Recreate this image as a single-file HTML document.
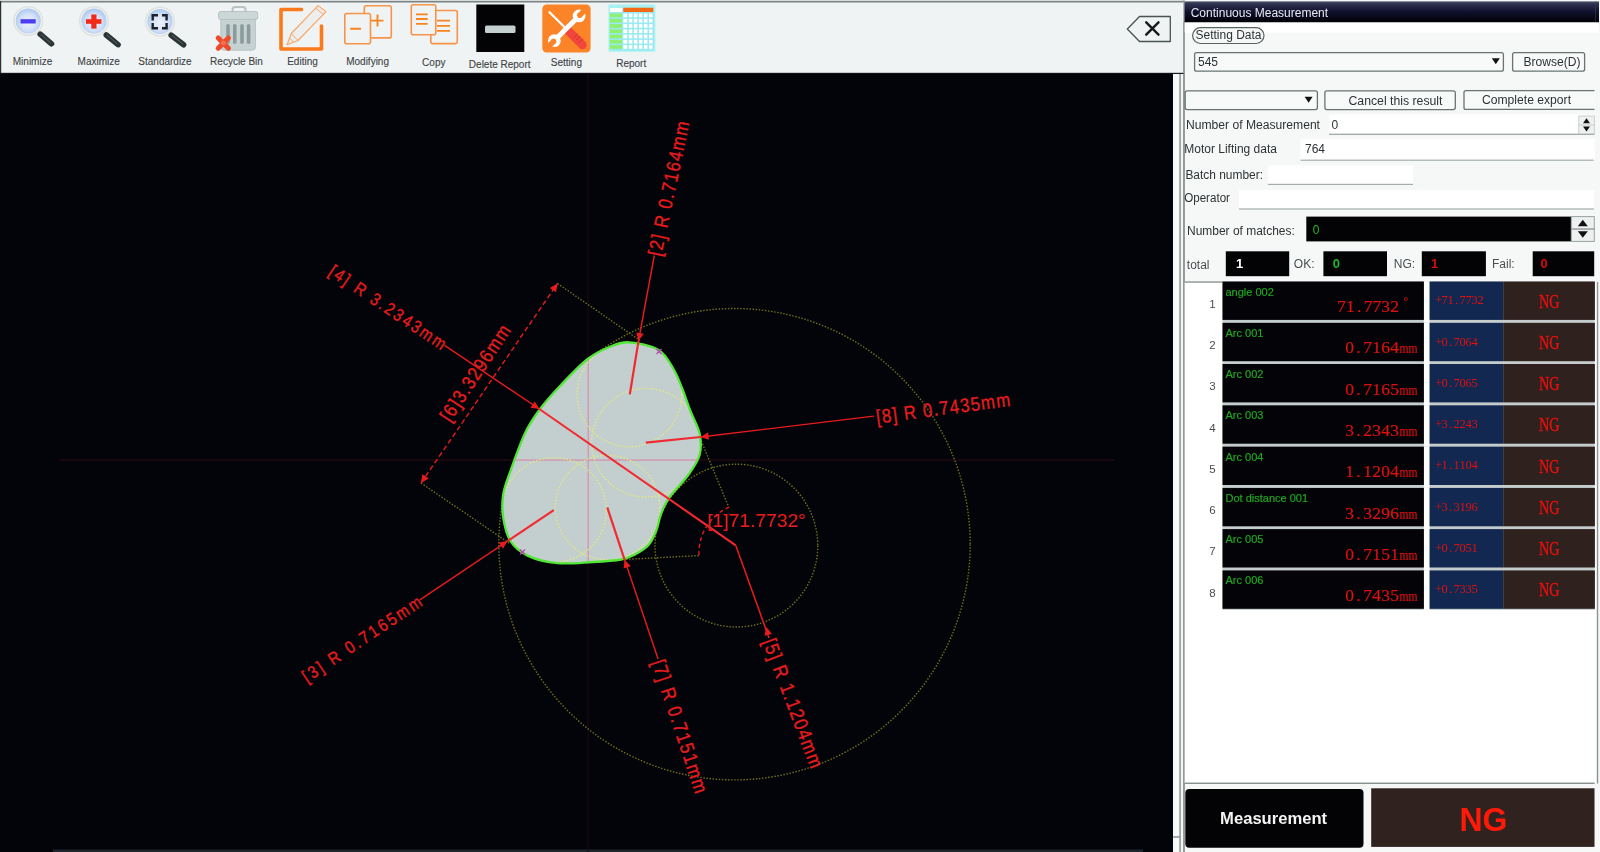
<!DOCTYPE html>
<html><head><meta charset="utf-8"><style>
html,body{margin:0;padding:0;background:#03030a;overflow:hidden;width:1600px;height:852px}
svg{display:block;filter:blur(0.45px)}
</style></head><body>
<svg width="1600" height="852" viewBox="0 0 1600 852">
<rect x="0" y="0" width="1184" height="73.5" fill="#eff3f3"/>
<rect x="0" y="0" width="1600" height="1" fill="#d8dcdc"/>
<rect x="0" y="1" width="1184" height="1.5" fill="#7a8282"/>
<rect x="0" y="1" width="1.2" height="72" fill="#2a3033"/>
<rect x="0" y="72.8" width="1184" height="1.2" fill="#1a1d22"/>
<defs>
<radialGradient id="lens" cx="0.5" cy="0.55" r="0.55">
<stop offset="0" stop-color="#eef2fb"/><stop offset="0.6" stop-color="#d2e0f6"/><stop offset="1" stop-color="#a8c6ef"/>
</radialGradient>
<linearGradient id="tbar" x1="0" y1="0" x2="0" y2="1">
<stop offset="0" stop-color="#4a5266"/><stop offset="0.12" stop-color="#2e3250"/><stop offset="0.5" stop-color="#10102e"/><stop offset="1" stop-color="#000004"/>
</linearGradient>
</defs>
<circle cx="28.2" cy="21" r="14.3" fill="#f4f6f4" stroke="#dfe3df" stroke-width="1.6"/>
<circle cx="28.2" cy="21" r="12.6" fill="url(#lens)"/>
<line x1="40.2" y1="34.2" x2="51.5" y2="43.8" stroke="#2c3535" stroke-width="5.6" stroke-linecap="round"/>
<line x1="41.2" y1="34.400000000000006" x2="50.5" y2="42.8" stroke="#7d8888" stroke-width="0.8" stroke-linecap="round" opacity="0.7"/>
<rect x="20.5" y="19.2" width="15.2" height="4.3" fill="#4a3ef2"/>
<circle cx="94" cy="21.2" r="14.3" fill="#f4f6f4" stroke="#dfe3df" stroke-width="1.6"/>
<circle cx="94" cy="21.2" r="12.6" fill="url(#lens)"/>
<line x1="106.3" y1="35" x2="118" y2="44.6" stroke="#2c3535" stroke-width="5.6" stroke-linecap="round"/>
<line x1="107.3" y1="35.2" x2="117" y2="43.6" stroke="#7d8888" stroke-width="0.8" stroke-linecap="round" opacity="0.7"/>
<rect x="91.3" y="14.5" width="5.2" height="14.1" fill="#f22a1a"/><rect x="86" y="19.2" width="15.4" height="4.6" fill="#f22a1a"/>
<circle cx="160" cy="21.5" r="14.3" fill="#f4f6f4" stroke="#dfe3df" stroke-width="1.6"/>
<circle cx="160" cy="21.5" r="12.6" fill="url(#lens)"/>
<line x1="171.2" y1="35.2" x2="183.6" y2="44.8" stroke="#2c3535" stroke-width="5.6" stroke-linecap="round"/>
<line x1="172.2" y1="35.400000000000006" x2="182.6" y2="43.8" stroke="#7d8888" stroke-width="0.8" stroke-linecap="round" opacity="0.7"/>
<path d="M152.7 20.5V15.3H158 M162 15.3H166.6V20.5 M166.6 23V28.3H162 M158 28.3H152.7V23" fill="none" stroke="#1e2228" stroke-width="2.4"/>
<path d="M232.5 12V9.5Q232.5 7 235 7H243Q245.5 7 245.5 9.5V12" fill="none" stroke="#b8c4c4" stroke-width="2"/>
<rect x="218.5" y="11.5" width="39.2" height="8" rx="2" fill="#cbd6d6" stroke="#b0bcbc" stroke-width="0.8"/>
<path d="M220.8 19.4H255.5V47Q255.5 50.3 252 50.3H224Q220.8 50.3 220.8 47Z" fill="#c6d2d2" stroke="#b3bfbf" stroke-width="0.8"/>
<rect x="226.2" y="24" width="3.6" height="20" rx="1.8" fill="#8c9c9c"/>
<rect x="233.0" y="24" width="3.6" height="20" rx="1.8" fill="#8c9c9c"/>
<rect x="240.2" y="24" width="3.6" height="20" rx="1.8" fill="#8c9c9c"/>
<rect x="246.79999999999998" y="24" width="3.6" height="20" rx="1.8" fill="#8c9c9c"/>
<path d="M218.2 38L228.4 48.2 M228.4 38L218.2 48.2" stroke="#f04828" stroke-width="5" stroke-linecap="round"/>
<circle cx="223.3" cy="43.1" r="2.5" fill="#f47050"/>
<path d="M301.5 9.5H281V49H321.5V26" fill="none" stroke="#fb7a1c" stroke-width="3.6" stroke-linecap="round" stroke-linejoin="round"/>
<path d="M287.1 44.8L291.3 33.5L318 5.6L326 11.6L298 40.5Z" fill="#ecefed" stroke="#f9a464" stroke-width="1.1" stroke-linejoin="round"/>
<path d="M291.3 33.5L298 40.5 M315.5 8.2L323.5 14.3 M289.5 38L293.5 42" stroke="#f9a464" stroke-width="1"/>
<rect x="364.3" y="5.7" width="27" height="32.2" rx="2" fill="#eff3f3" stroke="#f8934a" stroke-width="1.6"/>
<rect x="344.8" y="13.5" width="25.7" height="30.2" rx="2" fill="#eff3f3" stroke="#f8934a" stroke-width="1.6"/>
<path d="M350.2 28.7H361 M371 20.6H383.5 M377.5 14.5V26.5" stroke="#f8841f" stroke-width="1.9"/>
<rect x="430.8" y="10.5" width="26.5" height="33.1" rx="2" fill="#eff3f3" stroke="#f8934a" stroke-width="1.6"/>
<rect x="411.3" y="4.8" width="24.5" height="30" rx="2" fill="#eff3f3" stroke="#f8934a" stroke-width="1.6"/>
<path d="M416 14.3H427.7 M416 19H427.7 M416 23.8H427.7 M437 20.6H450 M437 25.8H450 M437 30.9H450" stroke="#f8841f" stroke-width="1.8"/>
<rect x="476.3" y="4.5" width="48" height="47.5" fill="#030305"/>
<rect x="485" y="25.5" width="30.5" height="7.5" rx="1.5" fill="#c4d0d0"/>
<rect x="542.3" y="4.5" width="48.3" height="48.1" rx="4.5" fill="#fb8428"/>
<line x1="549.5" y1="12.2" x2="568" y2="30.5" stroke="#fff" stroke-width="2.2" stroke-linecap="round"/>
<line x1="568.5" y1="31" x2="582.5" y2="45" stroke="#f0463c" stroke-width="8.5" stroke-linecap="round"/>
<path d="M574 37.5L578 33.5 M576.5 40L580.5 36 M579 42.5L583 38.5" stroke="#d02a20" stroke-width="0.9"/>
<g transform="translate(566.7 28.3) rotate(-45)"><rect x="-17" y="-2.5" width="34" height="5" fill="#fff"/><circle cx="-17.5" cy="0" r="6.4" fill="#fff"/><circle cx="17.5" cy="0" r="6.4" fill="#fff"/><rect x="18" y="-2.7" width="8" height="5.4" fill="#fb8428"/><circle cx="18.5" cy="0" r="2.7" fill="#fb8428"/><rect x="-26" y="-2.7" width="8" height="5.4" fill="#fb8428"/><circle cx="-18.5" cy="0" r="2.7" fill="#fb8428"/></g>
<rect x="608.5" y="4.5" width="46.8" height="47.2" fill="#a6f2f2"/>
<rect x="610" y="8" width="12.5" height="4.7" fill="#ffffff"/>
<rect x="623" y="7.7" width="30.3" height="5" fill="#f46a14"/>
<rect x="609.7" y="12.8" width="12.6" height="36.8" fill="#8ef070"/>
<rect x="623" y="12.8" width="30.3" height="36.8" fill="#ffffff"/>
<rect x="627.25" y="12.8" width="1.6" height="36.8" fill="#9aeaf0"/>
<rect x="632.3000000000001" y="12.8" width="1.6" height="36.8" fill="#9aeaf0"/>
<rect x="637.35" y="12.8" width="1.6" height="36.8" fill="#9aeaf0"/>
<rect x="642.4000000000001" y="12.8" width="1.6" height="36.8" fill="#9aeaf0"/>
<rect x="647.45" y="12.8" width="1.6" height="36.8" fill="#9aeaf0"/>
<rect x="652.5" y="12.8" width="1.6" height="36.8" fill="#9aeaf0"/>
<rect x="609.7" y="12.0" width="43.6" height="1.6" fill="#9aeaf0"/>
<rect x="609.7" y="17.26" width="43.6" height="1.6" fill="#9aeaf0"/>
<rect x="609.7" y="22.52" width="43.6" height="1.6" fill="#9aeaf0"/>
<rect x="609.7" y="27.779999999999998" width="43.6" height="1.6" fill="#9aeaf0"/>
<rect x="609.7" y="33.040000000000006" width="43.6" height="1.6" fill="#9aeaf0"/>
<rect x="609.7" y="38.3" width="43.6" height="1.6" fill="#9aeaf0"/>
<rect x="609.7" y="43.56" width="43.6" height="1.6" fill="#9aeaf0"/>
<rect x="609.7" y="48.82000000000001" width="43.6" height="1.6" fill="#9aeaf0"/>
<rect x="622.4" y="7.7" width="0.9" height="42" fill="#9aeaf0"/>
<path d="M1139.5 16.5H1170.3V41.5H1139.5L1127.3 29Z" fill="none" stroke="#4a5252" stroke-width="1.3" stroke-linejoin="round"/>
<path d="M1146.2 22.3L1158.5 34.7 M1158.5 22.3L1146.2 34.7" stroke="#161a1a" stroke-width="2.4" stroke-linecap="round"/>
<text x="32.5" y="65" font-family="Liberation Sans" font-size="10" fill="#3c4144" text-anchor="middle" font-weight="normal" stroke="#3c4144" stroke-width="0.1">Minimize</text>
<text x="98.7" y="65" font-family="Liberation Sans" font-size="10" fill="#3c4144" text-anchor="middle" font-weight="normal" stroke="#3c4144" stroke-width="0.1">Maximize</text>
<text x="165" y="65" font-family="Liberation Sans" font-size="10" fill="#3c4144" text-anchor="middle" font-weight="normal" stroke="#3c4144" stroke-width="0.1">Standardize</text>
<text x="236.5" y="65" font-family="Liberation Sans" font-size="10" fill="#3c4144" text-anchor="middle" font-weight="normal" stroke="#3c4144" stroke-width="0.1">Recycle Bin</text>
<text x="302.5" y="65" font-family="Liberation Sans" font-size="10" fill="#3c4144" text-anchor="middle" font-weight="normal" stroke="#3c4144" stroke-width="0.1">Editing</text>
<text x="367.6" y="65" font-family="Liberation Sans" font-size="10" fill="#3c4144" text-anchor="middle" font-weight="normal" stroke="#3c4144" stroke-width="0.1">Modifying</text>
<text x="433.8" y="65.5" font-family="Liberation Sans" font-size="10" fill="#3c4144" text-anchor="middle" font-weight="normal" stroke="#3c4144" stroke-width="0.1">Copy</text>
<text x="499.7" y="67.5" font-family="Liberation Sans" font-size="10" fill="#3c4144" text-anchor="middle" font-weight="normal" stroke="#3c4144" stroke-width="0.1">Delete Report</text>
<text x="566.4" y="66.3" font-family="Liberation Sans" font-size="10" fill="#3c4144" text-anchor="middle" font-weight="normal" stroke="#3c4144" stroke-width="0.1">Setting</text>
<text x="631.2" y="66.5" font-family="Liberation Sans" font-size="10" fill="#3c4144" text-anchor="middle" font-weight="normal" stroke="#3c4144" stroke-width="0.1">Report</text>
<rect x="0" y="73.6" width="1173" height="779" fill="#03030a"/>
<rect x="53" y="849.5" width="1090" height="2.5" fill="#1c262c"/>
<defs><clipPath id="blobclip"><path d="M629.0 342.3 C637.2 342.8 651.2 345.4 658.6 349.9 C666.0 354.3 669.6 362.6 673.5 369.0 C677.4 375.4 679.2 381.2 682.0 388.0 C684.8 394.8 687.1 402.4 690.0 410.0 C692.9 417.6 698.0 426.1 699.6 433.6 C701.2 441.1 701.4 448.3 699.6 455.0 C697.8 461.7 694.1 466.8 689.0 474.0 C683.9 481.2 673.7 491.3 669.0 498.0 C664.3 504.7 663.1 508.7 661.0 514.0 C658.9 519.3 658.6 524.8 656.5 530.0 C654.4 535.2 652.2 540.8 648.5 545.0 C644.8 549.2 638.6 552.6 634.0 555.0 C629.4 557.4 627.9 558.3 621.0 559.5 C614.1 560.7 603.3 561.4 592.7 562.0 C582.1 562.6 568.3 564.2 557.5 563.2 C546.7 562.2 535.9 559.6 528.1 555.9 C520.3 552.2 514.6 547.6 510.5 541.2 C506.4 534.8 504.4 525.5 503.2 517.7 C502.0 509.9 502.0 502.1 503.2 494.3 C504.4 486.5 506.8 481.1 510.5 470.8 C514.2 460.5 520.3 443.0 525.2 432.7 C530.1 422.4 534.1 417.0 539.9 409.2 C545.7 401.4 552.1 394.3 560.0 386.0 C567.9 377.7 578.8 366.0 587.0 359.5 C595.2 353.0 602.3 349.9 609.3 347.0 C616.3 344.1 620.8 341.8 629.0 342.3Z"/></clipPath></defs>
<rect x="587.4" y="73" width="1.2" height="779" fill="#1e0810"/>
<rect x="60" y="459.4" width="1054" height="1.3" fill="#260a12"/>
<circle cx="734.5" cy="544.2" r="235.7" fill="none" stroke="#70701c" stroke-width="1.4" stroke-dasharray="1.5 1.6"/>
<circle cx="736.4" cy="545.6" r="81.4" fill="none" stroke="#70701c" stroke-width="1.4" stroke-dasharray="1.5 1.6"/>
<line x1="557.5" y1="283.5" x2="640" y2="340.5" stroke="#70701c" stroke-width="1.4" stroke-dasharray="1.5 1.6"/>
<line x1="421" y1="483" x2="509" y2="543" stroke="#70701c" stroke-width="1.4" stroke-dasharray="1.5 1.6"/>
<line x1="700" y1="438" x2="728.5" y2="506.5" stroke="#70701c" stroke-width="1.4" stroke-dasharray="1.5 1.6"/>
<line x1="698.8" y1="555.6" x2="623.9" y2="559.5" stroke="#70701c" stroke-width="1.4" stroke-dasharray="1.5 1.6"/>
<path d="M629.0 342.3 C637.2 342.8 651.2 345.4 658.6 349.9 C666.0 354.3 669.6 362.6 673.5 369.0 C677.4 375.4 679.2 381.2 682.0 388.0 C684.8 394.8 687.1 402.4 690.0 410.0 C692.9 417.6 698.0 426.1 699.6 433.6 C701.2 441.1 701.4 448.3 699.6 455.0 C697.8 461.7 694.1 466.8 689.0 474.0 C683.9 481.2 673.7 491.3 669.0 498.0 C664.3 504.7 663.1 508.7 661.0 514.0 C658.9 519.3 658.6 524.8 656.5 530.0 C654.4 535.2 652.2 540.8 648.5 545.0 C644.8 549.2 638.6 552.6 634.0 555.0 C629.4 557.4 627.9 558.3 621.0 559.5 C614.1 560.7 603.3 561.4 592.7 562.0 C582.1 562.6 568.3 564.2 557.5 563.2 C546.7 562.2 535.9 559.6 528.1 555.9 C520.3 552.2 514.6 547.6 510.5 541.2 C506.4 534.8 504.4 525.5 503.2 517.7 C502.0 509.9 502.0 502.1 503.2 494.3 C504.4 486.5 506.8 481.1 510.5 470.8 C514.2 460.5 520.3 443.0 525.2 432.7 C530.1 422.4 534.1 417.0 539.9 409.2 C545.7 401.4 552.1 394.3 560.0 386.0 C567.9 377.7 578.8 366.0 587.0 359.5 C595.2 353.0 602.3 349.9 609.3 347.0 C616.3 344.1 620.8 341.8 629.0 342.3Z" fill="#c3cfcf"/>
<g clip-path="url(#blobclip)"><rect x="587.6" y="73" width="1.1" height="779" fill="#d888a8"/><rect x="60" y="459.5" width="1054" height="1.1" fill="#d888a8"/>
<circle cx="629.5" cy="394.5" r="52.3" fill="none" stroke="#e4ea7a" stroke-width="1.3" stroke-dasharray="1.6 1.8"/>
<circle cx="646" cy="442.7" r="54.3" fill="none" stroke="#e4ea7a" stroke-width="1.3" stroke-dasharray="1.6 1.8"/>
<circle cx="554" cy="510" r="52.3" fill="none" stroke="#e4ea7a" stroke-width="1.3" stroke-dasharray="1.6 1.8"/>
<circle cx="607.5" cy="507.5" r="52.2" fill="none" stroke="#e4ea7a" stroke-width="1.3" stroke-dasharray="1.6 1.8"/>
</g>
<path d="M629.0 342.3 C637.2 342.8 651.2 345.4 658.6 349.9 C666.0 354.3 669.6 362.6 673.5 369.0 C677.4 375.4 679.2 381.2 682.0 388.0 C684.8 394.8 687.1 402.4 690.0 410.0 C692.9 417.6 698.0 426.1 699.6 433.6 C701.2 441.1 701.4 448.3 699.6 455.0 C697.8 461.7 694.1 466.8 689.0 474.0 C683.9 481.2 673.7 491.3 669.0 498.0 C664.3 504.7 663.1 508.7 661.0 514.0 C658.9 519.3 658.6 524.8 656.5 530.0 C654.4 535.2 652.2 540.8 648.5 545.0 C644.8 549.2 638.6 552.6 634.0 555.0 C629.4 557.4 627.9 558.3 621.0 559.5 C614.1 560.7 603.3 561.4 592.7 562.0 C582.1 562.6 568.3 564.2 557.5 563.2 C546.7 562.2 535.9 559.6 528.1 555.9 C520.3 552.2 514.6 547.6 510.5 541.2 C506.4 534.8 504.4 525.5 503.2 517.7 C502.0 509.9 502.0 502.1 503.2 494.3 C504.4 486.5 506.8 481.1 510.5 470.8 C514.2 460.5 520.3 443.0 525.2 432.7 C530.1 422.4 534.1 417.0 539.9 409.2 C545.7 401.4 552.1 394.3 560.0 386.0 C567.9 377.7 578.8 366.0 587.0 359.5 C595.2 353.0 602.3 349.9 609.3 347.0 C616.3 344.1 620.8 341.8 629.0 342.3Z" fill="none" stroke="#52e636" stroke-width="2.3"/>
<path d="M656.5 349.0L661.5 354.0M661.5 349.0L656.5 354.0" stroke="#c040c0" stroke-width="1.2"/>
<path d="M520.0 549.5L525.0 554.5M525.0 549.5L520.0 554.5" stroke="#c040c0" stroke-width="1.2"/>
<line x1="444.6" y1="345.3" x2="539.3" y2="409" stroke="#e81c1c" stroke-width="1.4" />
<line x1="539.3" y1="409" x2="735.7" y2="545.3" stroke="#f02a30" stroke-width="2.1" />
<path d="M539.3 409.0L530.5 407.7L534.8 401.4Z" fill="#e81c1c"/>
<line x1="735.7" y1="545.3" x2="769" y2="638" stroke="#e81c1c" stroke-width="1.5" />
<path d="M766.4 627.0L771.9 633.9L764.5 635.7Z" fill="#e81c1c"/>
<line x1="629.8" y1="394.4" x2="638.5" y2="341" stroke="#f02a30" stroke-width="2.2" />
<line x1="638.5" y1="341" x2="654.3" y2="255.5" stroke="#e81c1c" stroke-width="1.4" />
<path d="M638.5 341.0L636.2 332.4L643.7 333.8Z" fill="#e81c1c"/>
<line x1="645.8" y1="442.7" x2="700.6" y2="437" stroke="#f02a30" stroke-width="2.2" />
<line x1="700.6" y1="437" x2="873.8" y2="416.1" stroke="#e81c1c" stroke-width="1.4" />
<path d="M700.6 437.0L708.1 432.3L709.0 439.8Z" fill="#e81c1c"/>
<line x1="553.8" y1="510.2" x2="507.5" y2="541.1" stroke="#f02a30" stroke-width="2.2" />
<line x1="507.5" y1="541.1" x2="419.9" y2="599.8" stroke="#e81c1c" stroke-width="1.4" />
<path d="M507.5 541.1L503.0 548.7L498.7 542.4Z" fill="#e81c1c"/>
<line x1="607.3" y1="507.5" x2="624.6" y2="559.8" stroke="#f02a30" stroke-width="2.2" />
<line x1="624.6" y1="559.8" x2="658.1" y2="659" stroke="#e81c1c" stroke-width="1.4" />
<path d="M624.6 559.8L630.8 566.2L623.6 568.6Z" fill="#e81c1c"/>
<line x1="421" y1="483" x2="557.5" y2="283.5" stroke="#e81c1c" stroke-width="1.4" stroke-dasharray="5 3"/>
<path d="M557.5 283.5L556.1 292.2L549.8 288.0Z" fill="#e81c1c"/>
<path d="M421.0 483.0L422.4 474.3L428.7 478.5Z" fill="#e81c1c"/>
<path d="M729.2 507.2 A49.5 49.5 0 0 0 699 555" fill="none" stroke="#e81c1c" stroke-width="1.4" stroke-dasharray="4 3"/>
<text transform="translate(330.9,268.9) rotate(33.90) scale(0.86,1)" x="0" y="6.3" font-family="Liberation Sans" font-size="17.5" fill="#e81c1c" stroke="#e81c1c" stroke-width="0.35" textLength="159.3" lengthAdjust="spacing">[4] R 3.2343mm</text>
<text transform="translate(303.6,677.7) rotate(-33.80) scale(0.86,1)" x="0" y="6.3" font-family="Liberation Sans" font-size="17.5" fill="#e81c1c" stroke="#e81c1c" stroke-width="0.35" textLength="162.8" lengthAdjust="spacing">[3] R 0.7165mm</text>
<text transform="translate(654.3,255.5) rotate(-78.00) scale(0.86,1)" x="0" y="6.8" font-family="Liberation Sans" font-size="19.5" fill="#e81c1c" stroke="#e81c1c" stroke-width="0.35" textLength="159.3" lengthAdjust="spacing">[2] R 0.7164mm</text>
<text transform="translate(876.0,417.0) rotate(-7.60) scale(0.86,1)" x="0" y="6.8" font-family="Liberation Sans" font-size="19.5" fill="#e81c1c" stroke="#e81c1c" stroke-width="0.35" textLength="157.0" lengthAdjust="spacing">[8] R 0.7435mm</text>
<text transform="translate(658.0,660.0) rotate(71.70) scale(0.86,1)" x="0" y="6.8" font-family="Liberation Sans" font-size="19.5" fill="#e81c1c" stroke="#e81c1c" stroke-width="0.35" textLength="162.1" lengthAdjust="spacing">[7] R 0.7151mm</text>
<text transform="translate(768.8,639.0) rotate(69.30) scale(0.86,1)" x="0" y="6.8" font-family="Liberation Sans" font-size="19.5" fill="#e81c1c" stroke="#e81c1c" stroke-width="0.35" textLength="159.3" lengthAdjust="spacing">[5] R 1.1204mm</text>
<text transform="translate(444.4,419.2) rotate(-56.50) scale(0.86,1)" x="0" y="6.8" font-family="Liberation Sans" font-size="19.5" fill="#e81c1c" stroke="#e81c1c" stroke-width="0.35" textLength="129.1" lengthAdjust="spacing">[6]3.3296mm</text>
<text x="707.5" y="527" font-family="Liberation Sans" font-size="18.5" fill="#e81c1c" stroke="#e81c1c" stroke-width="0.15" textLength="98.5" lengthAdjust="spacingAndGlyphs">[1]71.7732°</text>
<rect x="1173" y="74" width="427" height="778" fill="#f4f6f6"/>
<rect x="1184" y="0" width="416" height="852" fill="#f6f8f8"/>
<rect x="1173" y="74" width="6.5" height="778" fill="#f8fafa"/>
<rect x="1179.4" y="74" width="1.3" height="778" fill="#7e8686"/>
<rect x="1183.3" y="22" width="1.4" height="830" fill="#6e7676"/>
<rect x="1183.3" y="0" width="1.4" height="73" fill="#9aa2a2"/>
<rect x="1184.5" y="1.4" width="414.5" height="21.1" fill="url(#tbar)"/>
<rect x="1595" y="1.4" width="1" height="21" fill="#3a4050" opacity="0.6"/>
<text x="1190.7" y="17.2" font-family="Liberation Sans" font-size="12" fill="#e6e8ee" text-anchor="start" font-weight="normal" >Continuous Measurement</text>
<rect x="1184.7" y="22.5" width="414" height="10" fill="#ffffff"/>
<rect x="1192.6" y="27.7" width="71.4" height="15.8" rx="7.9" fill="#f6f8f8" stroke="#5a6262" stroke-width="1.2"/>
<text x="1195.5" y="39.3" font-family="Liberation Sans" font-size="12" fill="#2e3234" text-anchor="start" font-weight="normal" textLength="66" lengthAdjust="spacingAndGlyphs" >Setting Data</text>
<rect x="1194.6" y="52.6" width="308.8" height="18.6" rx="2" fill="#f8fafa" stroke="#6a7272" stroke-width="1.3"/>
<text x="1198" y="66" font-family="Liberation Sans" font-size="12" fill="#2e3234" text-anchor="start" font-weight="normal" >545</text>
<path d="M1491.8 58.3H1499.8L1495.8 64.3Z" fill="#111"/>
<rect x="1512.6" y="52.6" width="72" height="18.6" rx="2" fill="#f8fafa" stroke="#6a7272" stroke-width="1.3"/>
<text x="1552" y="66" font-family="Liberation Sans" font-size="12" fill="#2e3234" text-anchor="middle" font-weight="normal" textLength="57" lengthAdjust="spacingAndGlyphs" >Browse(D)</text>
<rect x="1185.2" y="90.8" width="132.2" height="18.8" rx="2" fill="#f8fafa" stroke="#6a7272" stroke-width="1.3"/>
<path d="M1304.6 96.8H1312.6L1308.6 102.8Z" fill="#111"/>
<rect x="1324.9" y="90.8" width="130.4" height="18.8" rx="2" fill="#f8fafa" stroke="#6a7272" stroke-width="1.3"/>
<text x="1395.5" y="104.6" font-family="Liberation Sans" font-size="12" fill="#2e3234" text-anchor="middle" font-weight="normal" textLength="94" lengthAdjust="spacingAndGlyphs" >Cancel this result</text>
<path d="M1594.5 90.6H1466Q1464 90.6 1464 92.6V107.4Q1464 109.4 1466 109.4H1594.5" fill="#f8fafa" stroke="#6a7272" stroke-width="1.3"/>
<text x="1526.5" y="104.4" font-family="Liberation Sans" font-size="12" fill="#2e3234" text-anchor="middle" font-weight="normal" textLength="89" lengthAdjust="spacingAndGlyphs" >Complete export</text>
<text x="1186" y="128.8" font-family="Liberation Sans" font-size="12" fill="#2e3234" text-anchor="start" font-weight="normal" textLength="134" lengthAdjust="spacingAndGlyphs" >Number of Measurement</text>
<rect x="1329.3" y="114.5" width="265" height="19.8" fill="#ffffff"/>
<rect x="1329.3" y="133.8" width="250" height="1.2" fill="#a4acac"/>
<text x="1331.5" y="128.8" font-family="Liberation Sans" font-size="12" fill="#2e3234" text-anchor="start" font-weight="normal" >0</text>
<rect x="1578.8" y="116" width="15.5" height="18" fill="#eef0f0" stroke="#c0c6c6" stroke-width="0.8"/>
<rect x="1578.8" y="124.6" width="15.5" height="0.8" fill="#c0c6c6"/>
<path d="M1583.0 123.3H1590.0L1586.5 118.3Z" fill="#111"/>
<path d="M1583.0 126.5H1590.0L1586.5 131.5Z" fill="#111"/>
<rect x="1329.3" y="133.8" width="265" height="1.2" fill="#a4acac"/>
<text x="1184.3" y="152.6" font-family="Liberation Sans" font-size="12" fill="#2e3234" text-anchor="start" font-weight="normal" textLength="92.6" lengthAdjust="spacingAndGlyphs" >Motor Lifting data</text>
<rect x="1300.6" y="139" width="294" height="21" fill="#ffffff"/>
<rect x="1300.6" y="159.6" width="293" height="1.2" fill="#a4acac"/>
<text x="1305" y="152.8" font-family="Liberation Sans" font-size="12" fill="#2e3234" text-anchor="start" font-weight="normal" >764</text>
<text x="1185.4" y="178.7" font-family="Liberation Sans" font-size="12" fill="#2e3234" text-anchor="start" font-weight="normal" textLength="77.6" lengthAdjust="spacingAndGlyphs" >Batch number:</text>
<rect x="1268" y="165.5" width="145" height="19" fill="#ffffff"/>
<rect x="1268" y="183.8" width="145" height="1.2" fill="#a4acac"/>
<text x="1184.2" y="202.4" font-family="Liberation Sans" font-size="12" fill="#2e3234" text-anchor="start" font-weight="normal" textLength="45.8" lengthAdjust="spacingAndGlyphs" >Operator</text>
<rect x="1239" y="190" width="355" height="18.5" fill="#ffffff"/>
<rect x="1239" y="208.4" width="355" height="1.2" fill="#a4acac"/>
<text x="1187" y="234.5" font-family="Liberation Sans" font-size="12" fill="#2e3234" text-anchor="start" font-weight="normal" textLength="107.8" lengthAdjust="spacingAndGlyphs" >Number of matches:</text>
<rect x="1306.3" y="216.6" width="265" height="24.8" fill="#030305"/>
<text x="1312.8" y="234.3" font-family="Liberation Sans" font-size="12" fill="#22b822" text-anchor="start" font-weight="normal" >0</text>
<rect x="1571.3" y="216.6" width="23" height="24.8" fill="#eef0f0" stroke="#9aa2a2" stroke-width="1"/>
<rect x="1571.3" y="228.4" width="23" height="1.3" fill="#8a9292"/>
<path d="M1577.8 226.25H1587.8L1582.8 219.75Z" fill="#111"/>
<path d="M1577.8 231.25H1587.8L1582.8 237.75Z" fill="#111"/>
<text x="1186.8" y="268.8" font-family="Liberation Sans" font-size="12" fill="#4a4e50" text-anchor="start" font-weight="normal" >total</text>
<rect x="1225.8" y="251.3" width="63.4" height="24.9" fill="#030305"/>
<text x="1236" y="268.3" font-family="Liberation Sans" font-size="13" fill="#ffffff" text-anchor="start" font-weight="bold" >1</text>
<text x="1293.8" y="268.3" font-family="Liberation Sans" font-size="12" fill="#4a4e50" text-anchor="start" font-weight="normal" >OK:</text>
<rect x="1323.4" y="251.3" width="63.6" height="24.9" fill="#030305"/>
<text x="1332.8" y="268.3" font-family="Liberation Sans" font-size="13" fill="#22b822" text-anchor="start" font-weight="bold" >0</text>
<text x="1393.8" y="268.3" font-family="Liberation Sans" font-size="12" fill="#4a4e50" text-anchor="start" font-weight="normal" >NG:</text>
<rect x="1421.8" y="251.3" width="64.1" height="24.9" fill="#030305"/>
<text x="1431" y="268.3" font-family="Liberation Sans" font-size="13" fill="#d80c0c" text-anchor="start" font-weight="bold" >1</text>
<text x="1492" y="268.3" font-family="Liberation Sans" font-size="12" fill="#4a4e50" text-anchor="start" font-weight="normal" >Fail:</text>
<rect x="1532.7" y="251.3" width="61.5" height="24.9" fill="#030305"/>
<text x="1540.5" y="268.3" font-family="Liberation Sans" font-size="13" fill="#d80c0c" text-anchor="start" font-weight="bold" >0</text>
<rect x="1184.7" y="281.8" width="412.5" height="501.4" fill="#ffffff"/>
<rect x="1184.7" y="281.5" width="38" height="1.1" fill="#6e7676"/>
<rect x="1596.8" y="282" width="1.4" height="501.5" fill="#8a9292"/>
<rect x="1222.5" y="281.5" width="372.2" height="41.27" fill="#c4cccc"/>
<rect x="1423.9" y="281.5" width="5.6" height="41.27" fill="#ffffff"/>
<rect x="1222.5" y="281.5" width="201.4" height="38.4" fill="#030308"/>
<rect x="1429.6" y="281.5" width="73.6" height="38.4" fill="#122850"/>
<rect x="1503.2" y="281.5" width="91.7" height="38.4" fill="#2e211e"/>
<text x="1212.5" y="307.7" font-family="Liberation Sans" font-size="11.5" fill="#4a4e50" text-anchor="middle" font-weight="normal" >1</text>
<text x="1225.5" y="295.6" font-family="Liberation Sans" font-size="11" fill="#1fa81f" text-anchor="start" font-weight="normal" stroke="#1fa81f" stroke-width="0.2">angle 002</text>
<text x="1341.4 1350.3 1359.1 1368.0 1376.8 1385.7 1394.5" y="312.1" font-family="Liberation Serif" font-size="17.5" fill="#dd1010" text-anchor="middle" stroke="#dd1010" stroke-width="0.2">71.7732</text>
<text x="1405.9" y="305.5" font-family="Liberation Sans" font-size="13" fill="#dd1010" text-anchor="middle">°</text>
<text x="1438.7 1444.7 1450.7 1456.7 1462.7 1468.7 1474.7 1480.7" y="304.2" font-family="Liberation Serif" font-size="12.5" fill="#dd1010" text-anchor="middle">+71.7732</text>
<text x="1549.3" y="307.6" font-family="Liberation Serif" font-size="19" fill="#e81010" text-anchor="middle" font-weight="normal" textLength="20.5" lengthAdjust="spacingAndGlyphs" stroke="#e81010" stroke-width="0.35">NG</text>
<rect x="1222.5" y="322.8" width="372.2" height="41.27" fill="#c4cccc"/>
<rect x="1423.9" y="322.8" width="5.6" height="41.27" fill="#ffffff"/>
<rect x="1222.5" y="322.8" width="201.4" height="38.4" fill="#030308"/>
<rect x="1429.6" y="322.8" width="73.6" height="38.4" fill="#122850"/>
<rect x="1503.2" y="322.8" width="91.7" height="38.4" fill="#2e211e"/>
<text x="1212.5" y="348.96999999999997" font-family="Liberation Sans" font-size="11.5" fill="#4a4e50" text-anchor="middle" font-weight="normal" >2</text>
<text x="1225.5" y="336.87" font-family="Liberation Sans" font-size="11" fill="#1fa81f" text-anchor="start" font-weight="normal" stroke="#1fa81f" stroke-width="0.2">Arc 001</text>
<text x="1349.5 1358.5 1367.5 1376.5 1385.5 1394.5" y="353.4" font-family="Liberation Serif" font-size="17.5" fill="#dd1010" text-anchor="middle" stroke="#dd1010" stroke-width="0.2">0.7164</text>
<text x="1399.5" y="353.4" font-family="Liberation Serif" font-size="15" fill="#dd1010" textLength="18" lengthAdjust="spacingAndGlyphs" stroke="#dd1010" stroke-width="0.2">mm</text>
<text x="1438.7 1444.7 1450.7 1456.7 1462.7 1468.7 1474.7" y="345.5" font-family="Liberation Serif" font-size="12.5" fill="#dd1010" text-anchor="middle">+0.7064</text>
<text x="1549.3" y="348.87" font-family="Liberation Serif" font-size="19" fill="#e81010" text-anchor="middle" font-weight="normal" textLength="20.5" lengthAdjust="spacingAndGlyphs" stroke="#e81010" stroke-width="0.35">NG</text>
<rect x="1222.5" y="364.0" width="372.2" height="41.27" fill="#c4cccc"/>
<rect x="1423.9" y="364.0" width="5.6" height="41.27" fill="#ffffff"/>
<rect x="1222.5" y="364.0" width="201.4" height="38.4" fill="#030308"/>
<rect x="1429.6" y="364.0" width="73.6" height="38.4" fill="#122850"/>
<rect x="1503.2" y="364.0" width="91.7" height="38.4" fill="#2e211e"/>
<text x="1212.5" y="390.24" font-family="Liberation Sans" font-size="11.5" fill="#4a4e50" text-anchor="middle" font-weight="normal" >3</text>
<text x="1225.5" y="378.14000000000004" font-family="Liberation Sans" font-size="11" fill="#1fa81f" text-anchor="start" font-weight="normal" stroke="#1fa81f" stroke-width="0.2">Arc 002</text>
<text x="1349.5 1358.5 1367.5 1376.5 1385.5 1394.5" y="394.6" font-family="Liberation Serif" font-size="17.5" fill="#dd1010" text-anchor="middle" stroke="#dd1010" stroke-width="0.2">0.7165</text>
<text x="1399.5" y="394.6" font-family="Liberation Serif" font-size="15" fill="#dd1010" textLength="18" lengthAdjust="spacingAndGlyphs" stroke="#dd1010" stroke-width="0.2">mm</text>
<text x="1438.7 1444.7 1450.7 1456.7 1462.7 1468.7 1474.7" y="386.7" font-family="Liberation Serif" font-size="12.5" fill="#dd1010" text-anchor="middle">+0.7065</text>
<text x="1549.3" y="390.14000000000004" font-family="Liberation Serif" font-size="19" fill="#e81010" text-anchor="middle" font-weight="normal" textLength="20.5" lengthAdjust="spacingAndGlyphs" stroke="#e81010" stroke-width="0.35">NG</text>
<rect x="1222.5" y="405.3" width="372.2" height="41.27" fill="#c4cccc"/>
<rect x="1423.9" y="405.3" width="5.6" height="41.27" fill="#ffffff"/>
<rect x="1222.5" y="405.3" width="201.4" height="38.4" fill="#030308"/>
<rect x="1429.6" y="405.3" width="73.6" height="38.4" fill="#122850"/>
<rect x="1503.2" y="405.3" width="91.7" height="38.4" fill="#2e211e"/>
<text x="1212.5" y="431.51" font-family="Liberation Sans" font-size="11.5" fill="#4a4e50" text-anchor="middle" font-weight="normal" >4</text>
<text x="1225.5" y="419.41" font-family="Liberation Sans" font-size="11" fill="#1fa81f" text-anchor="start" font-weight="normal" stroke="#1fa81f" stroke-width="0.2">Arc 003</text>
<text x="1349.5 1358.5 1367.5 1376.5 1385.5 1394.5" y="435.9" font-family="Liberation Serif" font-size="17.5" fill="#dd1010" text-anchor="middle" stroke="#dd1010" stroke-width="0.2">3.2343</text>
<text x="1399.5" y="435.9" font-family="Liberation Serif" font-size="15" fill="#dd1010" textLength="18" lengthAdjust="spacingAndGlyphs" stroke="#dd1010" stroke-width="0.2">mm</text>
<text x="1438.7 1444.7 1450.7 1456.7 1462.7 1468.7 1474.7" y="428.0" font-family="Liberation Serif" font-size="12.5" fill="#dd1010" text-anchor="middle">+3.2243</text>
<text x="1549.3" y="431.41" font-family="Liberation Serif" font-size="19" fill="#e81010" text-anchor="middle" font-weight="normal" textLength="20.5" lengthAdjust="spacingAndGlyphs" stroke="#e81010" stroke-width="0.35">NG</text>
<rect x="1222.5" y="446.6" width="372.2" height="41.27" fill="#c4cccc"/>
<rect x="1423.9" y="446.6" width="5.6" height="41.27" fill="#ffffff"/>
<rect x="1222.5" y="446.6" width="201.4" height="38.4" fill="#030308"/>
<rect x="1429.6" y="446.6" width="73.6" height="38.4" fill="#122850"/>
<rect x="1503.2" y="446.6" width="91.7" height="38.4" fill="#2e211e"/>
<text x="1212.5" y="472.78000000000003" font-family="Liberation Sans" font-size="11.5" fill="#4a4e50" text-anchor="middle" font-weight="normal" >5</text>
<text x="1225.5" y="460.68000000000006" font-family="Liberation Sans" font-size="11" fill="#1fa81f" text-anchor="start" font-weight="normal" stroke="#1fa81f" stroke-width="0.2">Arc 004</text>
<text x="1349.5 1358.5 1367.5 1376.5 1385.5 1394.5" y="477.2" font-family="Liberation Serif" font-size="17.5" fill="#dd1010" text-anchor="middle" stroke="#dd1010" stroke-width="0.2">1.1204</text>
<text x="1399.5" y="477.2" font-family="Liberation Serif" font-size="15" fill="#dd1010" textLength="18" lengthAdjust="spacingAndGlyphs" stroke="#dd1010" stroke-width="0.2">mm</text>
<text x="1438.7 1444.7 1450.7 1456.7 1462.7 1468.7 1474.7" y="469.3" font-family="Liberation Serif" font-size="12.5" fill="#dd1010" text-anchor="middle">+1.1104</text>
<text x="1549.3" y="472.68000000000006" font-family="Liberation Serif" font-size="19" fill="#e81010" text-anchor="middle" font-weight="normal" textLength="20.5" lengthAdjust="spacingAndGlyphs" stroke="#e81010" stroke-width="0.35">NG</text>
<rect x="1222.5" y="487.9" width="372.2" height="41.27" fill="#c4cccc"/>
<rect x="1423.9" y="487.9" width="5.6" height="41.27" fill="#ffffff"/>
<rect x="1222.5" y="487.9" width="201.4" height="38.4" fill="#030308"/>
<rect x="1429.6" y="487.9" width="73.6" height="38.4" fill="#122850"/>
<rect x="1503.2" y="487.9" width="91.7" height="38.4" fill="#2e211e"/>
<text x="1212.5" y="514.0500000000001" font-family="Liberation Sans" font-size="11.5" fill="#4a4e50" text-anchor="middle" font-weight="normal" >6</text>
<text x="1225.5" y="501.95000000000005" font-family="Liberation Sans" font-size="11" fill="#1fa81f" text-anchor="start" font-weight="normal" stroke="#1fa81f" stroke-width="0.2">Dot distance 001</text>
<text x="1349.5 1358.5 1367.5 1376.5 1385.5 1394.5" y="518.5" font-family="Liberation Serif" font-size="17.5" fill="#dd1010" text-anchor="middle" stroke="#dd1010" stroke-width="0.2">3.3296</text>
<text x="1399.5" y="518.5" font-family="Liberation Serif" font-size="15" fill="#dd1010" textLength="18" lengthAdjust="spacingAndGlyphs" stroke="#dd1010" stroke-width="0.2">mm</text>
<text x="1438.7 1444.7 1450.7 1456.7 1462.7 1468.7 1474.7" y="510.6" font-family="Liberation Serif" font-size="12.5" fill="#dd1010" text-anchor="middle">+3.3196</text>
<text x="1549.3" y="513.95" font-family="Liberation Serif" font-size="19" fill="#e81010" text-anchor="middle" font-weight="normal" textLength="20.5" lengthAdjust="spacingAndGlyphs" stroke="#e81010" stroke-width="0.35">NG</text>
<rect x="1222.5" y="529.1" width="372.2" height="41.27" fill="#c4cccc"/>
<rect x="1423.9" y="529.1" width="5.6" height="41.27" fill="#ffffff"/>
<rect x="1222.5" y="529.1" width="201.4" height="38.4" fill="#030308"/>
<rect x="1429.6" y="529.1" width="73.6" height="38.4" fill="#122850"/>
<rect x="1503.2" y="529.1" width="91.7" height="38.4" fill="#2e211e"/>
<text x="1212.5" y="555.32" font-family="Liberation Sans" font-size="11.5" fill="#4a4e50" text-anchor="middle" font-weight="normal" >7</text>
<text x="1225.5" y="543.22" font-family="Liberation Sans" font-size="11" fill="#1fa81f" text-anchor="start" font-weight="normal" stroke="#1fa81f" stroke-width="0.2">Arc 005</text>
<text x="1349.5 1358.5 1367.5 1376.5 1385.5 1394.5" y="559.7" font-family="Liberation Serif" font-size="17.5" fill="#dd1010" text-anchor="middle" stroke="#dd1010" stroke-width="0.2">0.7151</text>
<text x="1399.5" y="559.7" font-family="Liberation Serif" font-size="15" fill="#dd1010" textLength="18" lengthAdjust="spacingAndGlyphs" stroke="#dd1010" stroke-width="0.2">mm</text>
<text x="1438.7 1444.7 1450.7 1456.7 1462.7 1468.7 1474.7" y="551.8" font-family="Liberation Serif" font-size="12.5" fill="#dd1010" text-anchor="middle">+0.7051</text>
<text x="1549.3" y="555.22" font-family="Liberation Serif" font-size="19" fill="#e81010" text-anchor="middle" font-weight="normal" textLength="20.5" lengthAdjust="spacingAndGlyphs" stroke="#e81010" stroke-width="0.35">NG</text>
<rect x="1222.5" y="570.4" width="372.2" height="39.5" fill="#c4cccc"/>
<rect x="1423.9" y="570.4" width="5.6" height="39.5" fill="#ffffff"/>
<rect x="1222.5" y="570.4" width="201.4" height="38.4" fill="#030308"/>
<rect x="1429.6" y="570.4" width="73.6" height="38.4" fill="#122850"/>
<rect x="1503.2" y="570.4" width="91.7" height="38.4" fill="#2e211e"/>
<text x="1212.5" y="596.5900000000001" font-family="Liberation Sans" font-size="11.5" fill="#4a4e50" text-anchor="middle" font-weight="normal" >8</text>
<text x="1225.5" y="584.4900000000001" font-family="Liberation Sans" font-size="11" fill="#1fa81f" text-anchor="start" font-weight="normal" stroke="#1fa81f" stroke-width="0.2">Arc 006</text>
<text x="1349.5 1358.5 1367.5 1376.5 1385.5 1394.5" y="601.0" font-family="Liberation Serif" font-size="17.5" fill="#dd1010" text-anchor="middle" stroke="#dd1010" stroke-width="0.2">0.7435</text>
<text x="1399.5" y="601.0" font-family="Liberation Serif" font-size="15" fill="#dd1010" textLength="18" lengthAdjust="spacingAndGlyphs" stroke="#dd1010" stroke-width="0.2">mm</text>
<text x="1438.7 1444.7 1450.7 1456.7 1462.7 1468.7 1474.7" y="593.1" font-family="Liberation Serif" font-size="12.5" fill="#dd1010" text-anchor="middle">+0.7335</text>
<text x="1549.3" y="596.4900000000001" font-family="Liberation Serif" font-size="19" fill="#e81010" text-anchor="middle" font-weight="normal" textLength="20.5" lengthAdjust="spacingAndGlyphs" stroke="#e81010" stroke-width="0.35">NG</text>
<rect x="1184.7" y="782.6" width="410" height="1.3" fill="#7e8686"/>
<rect x="1185.3" y="789" width="178.2" height="58.7" rx="4" fill="#030305"/>
<text x="1273.6" y="824.2" font-family="Liberation Sans" font-size="17" fill="#f4f4f4" text-anchor="middle" font-weight="bold" textLength="107" lengthAdjust="spacingAndGlyphs" >Measurement</text>
<rect x="1371.2" y="788.3" width="223.3" height="58.6" fill="#2f221f"/>
<text x="1483.4" y="830.6" font-family="Liberation Sans" font-size="33" fill="#ff1a08" text-anchor="middle" font-weight="bold" textLength="48" lengthAdjust="spacingAndGlyphs" >NG</text>
<rect x="1173" y="836.3" width="7" height="1.3" fill="#7e8686"/>
</svg></body></html>
